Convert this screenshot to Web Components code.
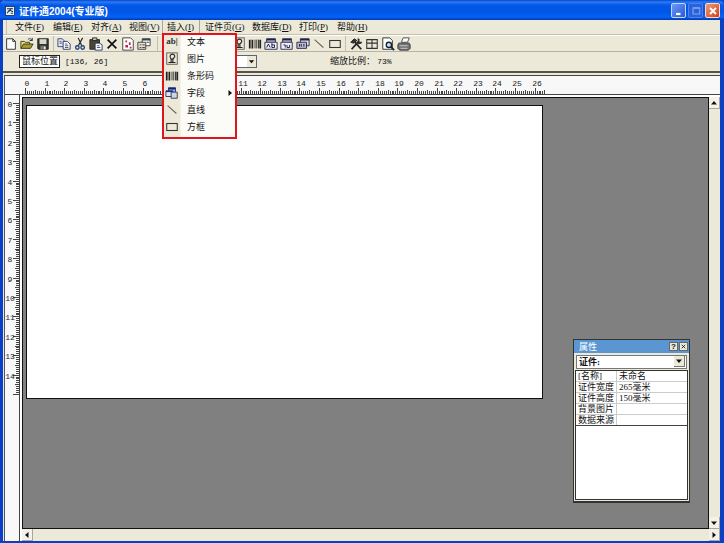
<!DOCTYPE html>
<html lang="zh-CN">
<head>
<meta charset="utf-8">
<title>证件通2004(专业版)</title>
<style>
html, body { height: 100%; margin: 0; }
body { font: 9px/12px "Liberation Serif", "Noto Sans CJK SC", serif; color: #111; overflow: hidden; }
</style>
</head>
<body>
<app-window caption="证件通2004(专业版)">
  <menu-bar slot="bars">
    <menu-entry label="文件" key="F"></menu-entry>
    <menu-entry label="编辑" key="E"></menu-entry>
    <menu-entry label="对齐" key="A"></menu-entry>
    <menu-entry label="视图" key="V"></menu-entry>
    <menu-entry label="插入" key="I" open>
      <menu-popup>
        <menu-command icon="text">文本</menu-command>
        <menu-command icon="picture">图片</menu-command>
        <menu-command icon="barcode">条形码</menu-command>
        <menu-command icon="field" submenu>字段</menu-command>
        <menu-command icon="line">直线</menu-command>
        <menu-command icon="rect">方框</menu-command>
      </menu-popup>
    </menu-entry>
    <menu-entry label="证件页" key="G" wide></menu-entry>
    <menu-entry label="数据库" key="D" wide></menu-entry>
    <menu-entry label="打印" key="P"></menu-entry>
    <menu-entry label="帮助" key="H"></menu-entry>
  </menu-bar>
  <tool-bar slot="bars">
    <tool-group>
      <tool-button icon="new" label="新建"></tool-button>
      <tool-button icon="open" label="打开"></tool-button>
      <tool-button icon="save" label="保存"></tool-button>
    </tool-group>
    <tool-group>
      <tool-button icon="copy" label="复制"></tool-button>
      <tool-button icon="cut" label="剪切"></tool-button>
      <tool-button icon="paste" label="粘贴"></tool-button>
      <tool-button icon="delete" label="删除"></tool-button>
      <tool-button icon="page" label="页面"></tool-button>
      <tool-button icon="props" label="属性"></tool-button>
    </tool-group>
    <tool-group>
      <tool-button icon="rect" label="左对齐"></tool-button>
      <tool-button icon="rect" label="居中"></tool-button>
      <tool-button icon="rect" label="右对齐"></tool-button>
    </tool-group>
    <tool-group>
      <tool-button icon="field" label="文本"></tool-button>
      <tool-button icon="picture" label="图片"></tool-button>
      <tool-button icon="barcode" label="条形码"></tool-button>
      <tool-button icon="fieldText" label="文本字段"></tool-button>
      <tool-button icon="fieldPic" label="图片字段"></tool-button>
      <tool-button icon="fieldBar" label="条码字段"></tool-button>
      <tool-button icon="line" label="直线"></tool-button>
      <tool-button icon="rect" label="方框"></tool-button>
    </tool-group>
    <tool-group>
      <tool-button icon="tools" label="工具"></tool-button>
      <tool-button icon="grid" label="表格"></tool-button>
      <tool-button icon="preview" label="预览"></tool-button>
      <tool-button icon="print" label="打印"></tool-button>
    </tool-group>
  </tool-bar>
  <info-bar slot="bars"></info-bar>
  <design-area></design-area>
  <property-panel slot="float"></property-panel>
</app-window>

<script>
const ICONS = {
  app: '<rect x="2" y="2" width="12" height="12" fill="#e8f0ff" stroke="#123"/><path d="M4 5h8M5 8h3M9 11h3M4 11l6-7M8 7l4 2" stroke="#143a50" stroke-width="1.5" fill="none"/>',
  new: '<path d="M3 2h7l3 3v9H3z" fill="#fff" stroke="#222"/><path d="M10 2v3h3" fill="none" stroke="#222"/>',
  open: '<path d="M1 13V5h4l1 1h5v2" fill="#e9dc6a" stroke="#332"/><path d="M1 13l3-5h11l-3 5z" fill="#a79a2c" stroke="#332"/><path d="M9 3c2-2 4-1 5 1m0-3v3h-3" fill="none" stroke="#222"/>',
  save: '<path d="M2 2h12v12H3l-1-1z" fill="#333" stroke="#222"/><path d="M4 2.500h8V8H4z" fill="#d8d8c8"/><path d="M5 10h6v4H5z" fill="#777"/><path d="M9 11h2v3H9z" fill="#eee"/>',
  copy: '<path d="M1 2h5l2 2v7H1z" fill="#dfe6f5" stroke="#334268"/><path d="M7 5h5l3 3v6H7z" fill="#fff" stroke="#223060"/><path d="M3 5h2M3 7h3M9 8h3M9 10h4M9 12h4" stroke="#446"/>',
  cut: '<path d="M6 1l4 9M11 1L6 10" stroke="#222" stroke-width="1.300"/><circle cx="5" cy="12" r="2" fill="none" stroke="#234080" stroke-width="1.500"/><circle cx="11" cy="12" r="2" fill="none" stroke="#234080" stroke-width="1.500"/>',
  paste: '<path d="M1 3h11v11H1z" fill="#4a4632" stroke="#222"/><path d="M4 1h5v3H4z" fill="#c8c4a0" stroke="#222"/><path d="M7 7h5l3 2v6H7z" fill="#fff" stroke="#223060"/><path d="M9 10h3M9 12h4" stroke="#446"/>',
  delete: '<path d="M3 3l10 10M13 3L3 13" stroke="#111" stroke-width="2"/>',
  page: '<path d="M2 1h9l3 3v11H2z" fill="#fff" stroke="#333"/><path d="M5 4h2v2H5zM9 6h2v3H9zM5 9h3v3H5zM10 11h2v2h-2z" fill="#b8254c"/>',
  props: '<path d="M6 2h9v8H6z" fill="#fff" stroke="#333"/><path d="M6 3h9" stroke="#345" stroke-width="2"/><path d="M1 6h9v8H1z" fill="#e8e4d4" stroke="#333"/><path d="M3 9h2M6 9h3M3 12h2M6 12h3M11 6h3" stroke="#333"/>',
  picture: '<rect x="2" y="1" width="12" height="13" fill="#eee8d8" stroke="#555"/><path d="M6 4c1-2 4-2 5 0s-1 3-2 4H7C6 7 5 6 6 4zM4 12h8M7 8v4M9 8v4" fill="none" stroke="#222" stroke-width="1.300"/>',
  barcode: '<path d="M2 3v10M5 3v10M14 3v10" stroke="#222" stroke-width="2"/><path d="M8 3v10M10 3v10M12 3v10" stroke="#222"/>',
  field: '<path d="M4 2h8v7H4z" fill="#9aaef0" stroke="#223080"/><path d="M4 3h8" stroke="#152070" stroke-width="2"/><path d="M1 6h8v6H1z" fill="#dfe6fa" stroke="#223060"/><path d="M1 6h8" stroke="#223080" stroke-width="2"/><path d="M7 7h7v7H7z" fill="#c8d4f4" stroke="#333"/>',
  fieldText: '<path d="M3 2h10v4H3z" fill="#dde" stroke="#224"/><path d="M3 3h10" stroke="#224" stroke-width="2"/><path d="M1 6h14v8H1z" fill="#eef" stroke="#224"/><path d="M3 12l2-4 2 4M9 7v5h3v-3H9" fill="none" stroke="#113"/>',
  fieldPic: '<path d="M3 2h10v4H3z" fill="#dde" stroke="#224"/><path d="M3 3h10" stroke="#224" stroke-width="2"/><path d="M1 6h13v8H1z" fill="#eef" stroke="#224"/><path d="M4 9h2v3M8 9v3h3V9" fill="none" stroke="#113"/>',
  fieldBar: '<path d="M5 2h10v8H5z" fill="#dde" stroke="#224"/><path d="M5 3h10" stroke="#224" stroke-width="2"/><path d="M1 6h11v7H1z" fill="#bbc" stroke="#224"/><path d="M4 8v3M6 8v3M9 8v3" stroke="#113"/>',
  line: '<path d="M3 3l10 9" stroke="#665" stroke-width="1.200"/>',
  rect: '<rect x="2" y="4" width="12" height="8" fill="none" stroke="#333" stroke-width="1.200"/>',
  tools: '<path d="M3 14l8-9M5 4l9 10" stroke="#222" stroke-width="2"/><path d="M2 6l4-4 3 2-4 3zM10 2c2 0 2 1 1 3l2 1c1-1 2 0 1 1l-4 1" fill="#333" stroke="#222"/>',
  grid: '<path d="M2 3h12v10H2zM2 7h12M8 3v10" fill="none" stroke="#333" stroke-width="1.200"/>',
  preview: '<path d="M2 1h8l3 3v10H2z" fill="#fff" stroke="#222"/><circle cx="9" cy="9" r="3" fill="#cde" stroke="#123" stroke-width="1.500"/><path d="M11 11l4 4" stroke="#123" stroke-width="2"/>',
  print: '<path d="M5 6l2-5h7l-2 5z" fill="#fff" stroke="#444"/><path d="M2 7h12l1 2v4l-2 2H3l-2-2V9z" fill="#777" stroke="#333"/><path d="M3 10h9M4 13h8" stroke="#ccc"/>',
  min: '<path d="M4 12h6" stroke="#fff" stroke-width="3"/>',
  max: '<path d="M4 4h9v8H4z" fill="none" stroke="#7ea4f4" stroke-width="1.500"/><path d="M4 4h9" stroke="#7ea4f4" stroke-width="2"/>',
  close: '<path d="M4 4l8 8M12 4l-8 8" stroke="#fff" stroke-width="2.500"/>',
  closeDark: '<path d="M4 4l8 8M12 4l-8 8" stroke="#111" stroke-width="2"/>',
  up: '<path d="M2 11l6-7 6 7z" fill="#111"/>',
  down: '<path d="M2 5l6 7 6-7z" fill="#111"/>',
  left: '<path d="M11 2L4 8l7 6z" fill="#111"/>',
  right: '<path d="M5 2l7 6-7 6z" fill="#111"/>'
};

function component(name, css, html, ready) {
  const tpl = document.createElement('template');
  tpl.innerHTML = `<style>${css}</style>${html}`;
  customElements.define(name, class extends HTMLElement {
    constructor() {
      super();
      this.attachShadow({ mode: 'open' }).append(tpl.content.cloneNode(true));
    }
    connectedCallback() { if (ready) ready.call(this, this.shadowRoot); }
  });
}

component('ui-icon',
  ':host{display:block;width:12px;height:12px;flex:none} svg,span{display:block;width:100%;height:100%} span{font:bold 9px/12px "Liberation Serif",serif;text-align:center;color:#333}',
  '', function (root) {
    const name = this.getAttribute('name');
    const tpl = document.createElement('template');
    tpl.innerHTML = name === 'text' ? '<span>ab|</span>'
      : `<svg viewBox="0 0 16 16" aria-hidden="true">${ICONS[name]}</svg>`;
    root.append(tpl.content);
  });

component('app-window', `
  :host{display:flex;flex-direction:column;height:100vh;box-sizing:border-box;position:relative;
    border:solid #0b3fc4;border-width:0 4px 2px 3px;background:#ece9d8}
  header{flex:none;display:flex;align-items:center;height:20px;margin:0 -4px 0 -3px;padding:1px 4px 0;gap:3px;box-sizing:border-box;
    background:linear-gradient(#0a46c8 0,#2a7cf8 2px,#0458e8 5px,#0055e5 12px,#0462fa 17px,#0238a8 20px);border-radius:5px 5px 0 0}
  h1{margin:0;flex:1;padding-top:2px;font:bold 10px/14px "Liberation Sans","Noto Sans CJK SC",sans-serif;color:#fff}
  .caps{display:flex;gap:2px}
  button{width:15px;height:15px;padding:0;border:1px solid #c4d6fa;border-radius:2px;display:grid;place-items:center;background:linear-gradient(135deg,#6d9af5,#2858d8)}
  button.max{background:#2a62dc;border-color:#4f80ec}
  button.close{background:linear-gradient(135deg,#f09a78,#d2401a);border-color:#f8d8cc}
  main{flex:1;min-height:0;display:flex;border-left:1px solid #dfe8fa}
  ::slotted([slot=bars]){flex:none}
  ::slotted(design-area){flex:1}`,
  `<header><ui-icon name="app"></ui-icon><h1></h1><div class="caps">
    <button aria-label="最小化"><ui-icon name="min"></ui-icon></button>
    <button class="max" aria-label="最大化"><ui-icon name="max"></ui-icon></button>
    <button class="close" aria-label="关闭"><ui-icon name="close"></ui-icon></button></div></header>
  <slot name="bars"></slot><main><slot></slot></main><slot name="float"></slot>`,
  function (root) { root.querySelector('h1').textContent = this.getAttribute('caption'); });

component('menu-bar', `
  :host{display:block;border-bottom:1px solid #c4c0b0;padding-left:3px}
  nav{display:flex;height:14px;padding-left:3px;border-left:1px solid #c4c0b0}`,
  '<nav><slot></slot></nav>');

component('menu-entry', `
  :host{display:block;position:relative;flex:0 0 38px}
  :host([wide]){flex-basis:47px}
  button{display:block;width:100%;height:14px;padding:0 0 0 4px;border:0;border-left:1px solid transparent;background:none;font:inherit;color:inherit;text-align:left;white-space:nowrap}
  :host([open]) button{border-left-color:#aaa698;border-right:1px solid #aaa698}`,
  '<button><span></span>(<u></u>)</button><slot></slot>',
  function (root) {
    root.querySelector('span').textContent = this.getAttribute('label');
    root.querySelector('u').textContent = this.getAttribute('key');
  });

component('menu-popup', `
  :host{position:absolute;z-index:5;left:0;top:13px;width:75px;box-sizing:border-box;border:2px solid #e0141c;
    background:linear-gradient(90deg,#ece9d8 16px,#fbfbf8 17px)}`,
  '<div role="menu"><slot></slot></div>');

component('menu-command', `
  :host{display:block}
  button{display:flex;align-items:center;gap:8px;width:100%;height:17px;border:0;background:none;padding:0 1px 3px;font:inherit;color:inherit}
  ui-icon{width:14px;height:14px}
  .text{flex:1;text-align:left}
  .arrow{width:8px;height:8px}`,
  '<button role="menuitem"><span class="text"><slot></slot></span></button>',
  function (root) {
    const b = root.querySelector('button');
    b.insertAdjacentHTML('afterbegin', `<ui-icon name="${this.getAttribute('icon')}"></ui-icon>`);
    if (this.hasAttribute('submenu'))
      b.insertAdjacentHTML('beforeend', '<ui-icon class="arrow" name="right"></ui-icon>');
  });

component('tool-bar', `
  :host{display:flex;align-items:center;height:15px;border-top:1px solid #fff;border-bottom:1px solid #b8b4a4}`,
  '<slot></slot>');

component('tool-group', `
  :host{display:flex;padding:0 2px 0 1px;border-right:1px solid #c4c0b0;margin-right:1px}
  :host(:first-child){padding-left:0}
  :host(:nth-child(2)){padding-right:5px}
  :host(:nth-child(3)){padding-right:4px}
  :host(:last-child){border:0}`,
  '<slot></slot>');

component('tool-button', `
  :host{display:block;flex:none}
  button{display:grid;place-items:center;width:16px;height:15px;padding:0;border:0;background:none}
  ui-icon{width:14px;height:14px}`,
  '<button></button>',
  function (root) {
    const b = root.querySelector('button');
    b.setAttribute('aria-label', this.getAttribute('label'));
    b.innerHTML = `<ui-icon name="${this.getAttribute('icon')}"></ui-icon>`;
  });

component('info-bar', `
  :host{display:grid;grid-template-columns:162px 92px 1fr;align-items:center;height:19px;padding-left:16px;border-bottom:2px solid #55534a;margin-bottom:2px}
  .pos{display:flex;align-items:center;gap:5px}
  .box{border:1px solid #222;background:#fff;padding:0 2px;line-height:11px;width:35px;white-space:nowrap}
  .mono{font-family:"Liberation Mono","Noto Sans CJK SC",monospace;font-size:8px}
  .combo{display:grid;grid-template-columns:65px 11px;height:13px;width:76px;box-sizing:border-box;border:1px solid #567;background:#fff}
  select{grid-area:1/1/2/3;appearance:none;border:0;background:none;width:100%;padding:0;min-width:0;height:11px}
  .drop{grid-area:1/2;width:9px;height:11px;background:#ece9d8;display:grid;place-items:center;pointer-events:none}
  ui-icon{width:7px;height:7px}
  .zoom{margin-left:57px}`,
  `<div class="pos"><span class="box">鼠标位置</span><span class="mono">[136, 26]</span></div>
   <div class="combo"><select aria-label="对象"><option></option></select><span class="drop"><ui-icon name="down"></ui-icon></span></div>
   <div class="zoom">缩放比例： <span class="mono">73%</span></div>`);

component('ruler-scale', `
  :host{display:block;overflow:hidden}
  svg{display:block;overflow:visible}
  text{font:8px "Liberation Mono",monospace;fill:#222;text-anchor:middle}
  rect{fill:#444;shape-rendering:crispEdges}`,
  '<svg width="1" height="1"></svg>',
  function (root) {
    const vertical = this.hasAttribute('vertical');
    const length = Number(this.getAttribute('length'));
    const cm = Number(this.getAttribute('pitch')) / 10;
    let ticks = '', labels = '';
    for (let mm = 0; mm <= length; mm += 1) {
      const p = Math.round(mm * cm / 10);
      const size = mm % 10 === 0 ? 6 : mm % 5 === 0 ? 4 : 3;
      ticks += vertical ? `<rect x="${14 - size}" y="${p + 8}" width="${size}" height="1"/>`
                        : `<rect x="${p + 3}" y="${18 - size}" width="1" height="${size}"/>`;
      if (mm % 10 === 0 && !(vertical && mm === length))
        labels += vertical ? `<text x="5" y="${p + 12}">${mm / 10}</text>`
                           : `<text x="${p + 5}" y="10">${mm / 10}</text>`;
    }
    root.querySelector('svg').innerHTML = ticks + labels;
  });

component('scroll-bar', `
  :host{display:flex;justify-content:space-between;background:#ece9d8;flex-direction:row}
  :host([vertical]){flex-direction:column}
  button{width:11px;height:12px;padding:0;border:1px solid #aaa698;border-width:0 1px 1px 0;background:#f4f2e8;display:grid;place-items:center}
  ui-icon{width:8px;height:8px}`,
  '<button aria-label="后退"></button><button aria-label="前进"></button>',
  function (root) {
    const names = this.hasAttribute('vertical') ? ['up', 'down'] : ['left', 'right'];
    root.querySelectorAll('button').forEach((b, i) => { b.innerHTML = `<ui-icon name="${names[i]}"></ui-icon>`; });
  });

component('design-area', `
  :host{display:grid;min-width:0;grid-template:19px 1fr 12px / 17px 1fr 11px;border-top:1px solid #444;border-left:1px solid #555;background:#fff}
  .top{grid-area:1/1/2/4;background:#f8f8f8;border-bottom:1px solid #444;padding-left:17px}
  .side{grid-area:2/1/4/2;background:#f8f8f8;border-right:1px solid #444;width:14px}
  .canvas{grid-area:2/2;background:#808080;border:1px solid #111;margin-top:2px;padding:7px 0 0 3px;overflow:hidden;min-width:0}
  .sheet{width:515px;aspect-ratio:265/150;background:#fff;border:1px solid #111;box-sizing:content-box}
  .v{grid-area:2/3;margin-top:2px}
  .h{grid-area:3/2/4/4}`,
  `<ruler-scale class="top" length="265" pitch="196"></ruler-scale>
   <ruler-scale class="side" vertical length="150" pitch="194"></ruler-scale>
   <div class="canvas"><div class="sheet"></div></div>
   <scroll-bar class="v" vertical></scroll-bar><scroll-bar class="h"></scroll-bar>`);

component('property-panel', `
  :host{position:absolute;right:30px;bottom:38px;width:117px;height:164px;box-sizing:border-box;border:1px solid #333;border-bottom-width:2px;
    background:#ece9d8;display:flex;flex-direction:column}
  header{display:flex;align-items:center;height:13px;background:#5a96d2;color:#fff;padding:0 1px 0 5px;gap:1px}
  h2{flex:1;margin:0;font:inherit}
  button{width:9px;height:9px;padding:0;border:1px solid #666;background:#ece9d8;display:grid;place-items:center;font:bold 8px/7px "Liberation Sans",sans-serif;color:#111}
  button ui-icon{width:7px;height:7px}
  .combo{display:grid;grid-template-columns:1fr 12px;margin:2px 2px 1px;border:1px solid #777;background:#fff;height:12px}
  select{grid-area:1/1/2/3;appearance:none;border:0;background:none;padding:0 2px;font:bold 9px/12px "Liberation Serif","Noto Sans CJK SC",serif;color:#111;height:12px;min-width:0}
  .drop{grid-area:1/2;width:10px;height:10px;background:#ece9d8;border:solid #777;border-width:0 1px 1px 0;display:grid;place-items:center;pointer-events:none}
  .drop ui-icon{width:8px;height:8px}
  .grid{flex:1;margin:0 1px 1px;border:1px solid #333;background:#fff}
  table{width:100%;border-collapse:collapse;table-layout:fixed;border-bottom:1px solid #444}
  th,td{font-weight:normal;text-align:left;padding:0 0 0 2px;height:10px;line-height:10px;border-bottom:1px solid #ccc;white-space:nowrap}
  tr:last-child>*{border-bottom-color:#444}
  th{width:38px;border-right:1px solid #ccc}`,
  `<header><h2>属性</h2><button aria-label="帮助">?</button><button aria-label="关闭"><ui-icon name="closeDark"></ui-icon></button></header>
   <div class="combo"><select aria-label="对象"><option>证件:</option></select><span class="drop"><ui-icon name="down"></ui-icon></span></div>
   <div class="grid"><table>
    <tr><th scope="row">[名称]</th><td>未命名</td></tr>
    <tr><th scope="row">证件宽度</th><td>265毫米</td></tr>
    <tr><th scope="row">证件高度</th><td>150毫米</td></tr>
    <tr><th scope="row">背景图片</th><td></td></tr>
    <tr><th scope="row">数据来源</th><td></td></tr>
   </table></div>`);
</script>
</body>
</html>
